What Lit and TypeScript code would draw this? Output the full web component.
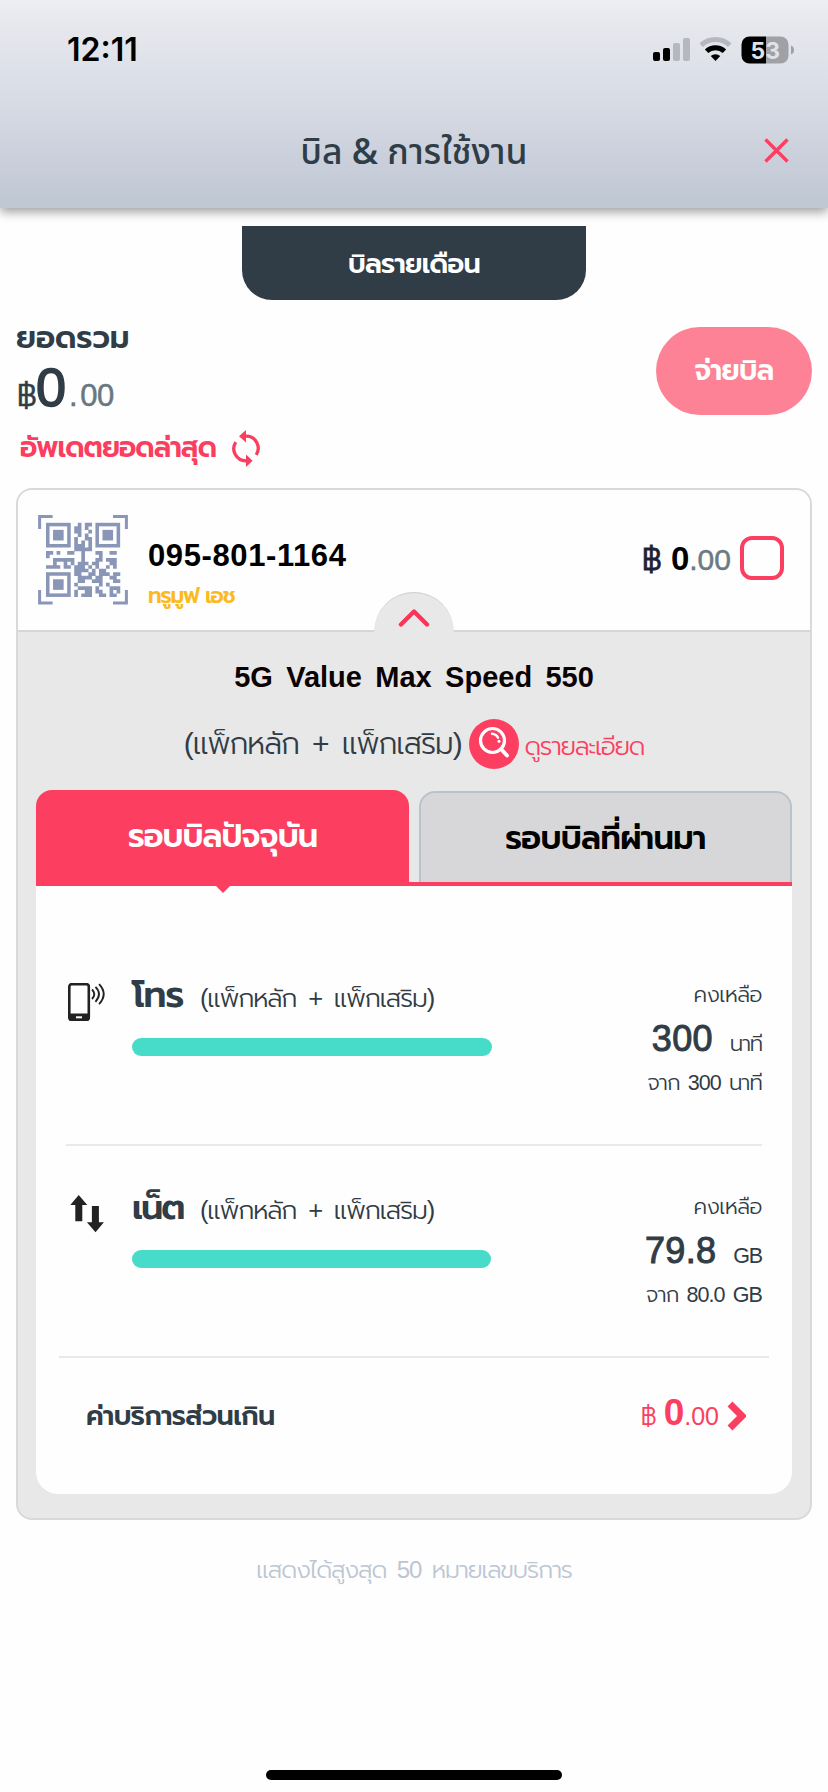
import { LitElement, html, css, svg } from "lit";

const QR_ROWS = [
  ".........X.XX........",
  "........XX.X.........",
  "........XX..X........",
  ".........X.X.........",
  "........X..XX........",
  "........X.X.X........",
  "........XXX.X........",
  "........XXXXX........",
  "XX.X..XX..X...XX..XX.",
  "X.........X....X.....",
  "..XXXXXX..X...XX.XXX.",
  "..X..X.X.XXX.XX...XX.",
  "XXXX.XX.XXX.X.X..X.X.",
  "........XXXX.X.XX....",
  "........XX..XX.XXX.XX",
  ".........XXXX.XX..XX.",
  ".........XX..XXX...XX",
  "........X......X.X...",
  ".........XXXX.X...XXX",
  "........X..XX.XX..X.X",
  "........X.XXX..XX.XX.",
];

const qrModules = QR_ROWS.map((row, y) =>
  [...row].map((c, x) => (c === "X" ? `M${x} ${y}h1.04v1.04h-1.04z` : "")).join("")
).join("");

const finder = (x: number, y: number) => svg`
  <rect x=${x + 0.5} y=${y + 0.5} width="6" height="6" fill="none" stroke="#8a96b8" stroke-width="1"></rect>
  <rect x=${x + 2} y=${y + 2} width="3" height="3" fill="#8a96b8"></rect>`;

const phoneIcon = svg`<svg width="40" height="40" viewBox="0 0 40 40">
  <rect x="3.300" y="1.200" width="19.500" height="35.600" rx="2.500" fill="none" stroke="#222" stroke-width="2.600"></rect>
  <path d="M2.500 30.500h21v5.300a2.300 2.300 0 0 1-2.300 2.300h-16.400a2.300 2.300 0 0 1-2.300-2.300z" fill="#222"></path>
  <rect x="10" y="33.300" width="6" height="2" fill="#fff"></rect>
  <path d="M26 6.500q4.600 4.500 0 9.500M29.500 3.800q7 7 0 15M33.100 1.200q9.200 9.800 0 20" fill="none" stroke="#222" stroke-width="1.900"></path>
</svg>`;

const netIcon = svg`<svg width="40" height="40" viewBox="0 0 40 40">
  <path d="M12.700 0l8.600 10h-5v16.300h-7v-16.300h-5z M29.500 37.300l-8.600-10h5v-16.300h7v16.300h5z" fill="#222"></path>
</svg>`;

const USAGE = [
  { icon: phoneIcon, name: "โทร", remain: "300", unit: "นาที", total: "จาก 300 นาที", bar: 360, cls: "first" },
  { icon: netIcon, name: "เน็ต", remain: "79.8", unit: "GB", total: "จาก 80.0 GB", bar: 359, cls: "second" },
];

class AppRoot extends LitElement {
  static styles = css`
    :host {
      display: block;
      --red: #fc3f60;
      --ink: #303c46;
      --th: "Liberation Sans", "Prompt", "Noto Sans Thai", sans-serif;
    }
    * { box-sizing: border-box; }
    svg { display: block; flex: none; }
    .page {
      width: 828px;
      height: 1792px;
      display: flex;
      flex-direction: column;
      background: #fefefe;
      font-family: var(--th);
      color: var(--ink);
      font-weight: 300;
      white-space: nowrap;
      overflow: hidden;
    }
    .page span { line-height: 0; }
    header {
      height: 208px;
      background: linear-gradient(#edeef3 0, #e7e8ed 12%, #dadee7 42%, #c6ccd8 85%, #bfc9d3 96%);
      box-shadow: 0 4px 10px rgba(0, 0, 0, 0.38);
    }
    .status {
      height: 100px;
      display: flex;
      align-items: center;
      justify-content: space-between;
      padding: 0 33px 0 67px;
      font: 600 32px/100px Inter, sans-serif;
      color: #000;
    }
    .num { font: 700 23px Inter, sans-serif; fill: #dfe2e9; }
    .title {
      display: grid;
      grid-template-columns: 80px 1fr 80px;
      align-items: center;
      height: 100px;
      font: 550 35.5px/100px "Open Sans", "Noto Sans Thai", sans-serif;
      text-align: center;
    }
    .title svg { margin-left: 16px; }
    .monthly {
      align-self: center;
      margin-top: 18px;
      width: 344px;
      height: 74px;
      border-radius: 0 0 30px 30px;
      background: #303c46;
      color: #fff;
      text-align: center;
      font-weight: 600;
      font-size: 27px;
      letter-spacing: -0.7px;
      line-height: 77px;
    }
    .summary { display: flex; justify-content: space-between; height: 188px; padding: 0 16px; }
    .sum-l { padding-top: 18px; }
    .total { font-size: 31px; line-height: 39px; height: 40px; font-weight: 600; letter-spacing: -0.1px; }
    .amount { margin-top: 7px; font-size: 32px; line-height: 60px; padding-left: 1px; }
    .amount .baht { font-size: 31px; -webkit-text-stroke: 0.6px; }
    .amount .big { font-size: 54px; -webkit-text-stroke: 1.6px; margin-left: -1px; }
    .amount .dec { font-size: 31px; color: #687782; word-spacing: -5px; letter-spacing: -0.5px; -webkit-text-stroke: 0.5px; }
    .refresh {
      display: flex;
      align-items: center;
      height: 40px;
      margin-top: 3px;
      padding-left: 4px;
      gap: 15px;
      color: #fb3e60;
      font-weight: 600;
      font-size: 28px;
      letter-spacing: -1px;
      line-height: 40px;
    }
    .pay {
      margin-top: 27px;
      width: 156px;
      height: 88px;
      border: 0;
      border-radius: 44px;
      background: #fd8295;
      color: #fff;
      font: 600 28px/88px var(--th);
      letter-spacing: -0.6px;
      padding: 0;
    }
    .card {
      margin: 0 16px;
      height: 1032px;
      border: 2px solid #d9d9d9;
      border-radius: 16px;
      background: #e8e8e8;
      overflow: hidden;
    }
    .card-head {
      position: relative;
      display: flex;
      height: 142px;
      padding-left: 20px;
      background: #fefefe;
      border-bottom: 2px solid #d6d6d6;
    }
    .qr { margin-top: 25px; }
    .line { margin: 46px 0 0 20px; }
    .phone { font-size: 31px; font-weight: 700; line-height: 40px; letter-spacing: 0.6px; color: #000; }
    .brand { margin-top: 5px; font-size: 21.5px; font-weight: 600; line-height: 30px; letter-spacing: -1.2px; word-spacing: 2px; color: #fbbb20; }
    .due {
      display: flex;
      align-items: center;
      height: 44px;
      margin: 46px 26px 0 auto;
      gap: 9px;
      font-size: 31px;
    }
    .due-amt { padding-top: 3px; line-height: 48px; color: #1f1f35; }
    .due-amt .baht { -webkit-text-stroke: 0.8px; }
    .due-amt .whole { font-size: 33px; font-weight: 700; color: #000; }
    .due-amt .dec { font-size: 30px; color: #6b7a83; -webkit-text-stroke: 0.5px; }
    .check { width: 44px; height: 44px; border: 4px solid var(--red); border-radius: 12px; }
    .bump {
      position: absolute;
      left: 356px;
      bottom: -2px;
      width: 80px;
      height: 40px;
      border-radius: 40px 40px 0 0;
      background: #e8e8e8;
      box-shadow: inset 0 2px 1px -1px #cfcfcf;
    }
    .bump svg { margin: 16px 0 0 24px; }
    .plan {
      padding-top: 25px;
      text-align: center;
      font-size: 29px;
      font-weight: 700;
      line-height: 40px;
      color: #0a0203;
      word-spacing: 5.3px;
    }
    .detail { display: flex; align-items: center; justify-content: center; height: 50px; margin-top: 22px; }
    .pack { font-size: 30px; line-height: 50px; word-spacing: 6px; letter-spacing: -1.1px; margin-right: 7px; }
    .look { font-size: 25px; line-height: 50px; padding-top: 4px; margin-left: 6px; letter-spacing: -1.3px; color: var(--red); }
    .tabs { display: grid; grid-template-columns: 373px 373px; gap: 10px; margin: 21px 18px 0; height: 92px; }
    .tab { text-align: center; font-size: 32px; font-weight: 600; letter-spacing: -0.9px; border-radius: 16px 16px 0 0; }
    .tab.on { background: var(--red); color: #fff; line-height: 93px; }
    .tab.off {
      margin: 1px 0;
      line-height: 90px;
      letter-spacing: -0.6px;
      border: 2px solid #b9c3cc;
      border-bottom: 0;
      background: #d7d7d9;
      color: #000;
    }
    .panel {
      position: relative;
      height: 612px;
      margin: 0 18px;
      padding-top: 48px;
      border-top: 4px solid var(--red);
      border-radius: 0 0 22px 22px;
      background: #fefefe;
    }
    .arrow {
      position: absolute;
      top: -1px;
      left: 179px;
      border: 8px solid transparent;
      border-top-color: var(--red);
      border-bottom: 0;
    }
    .usage { display: flex; height: 212px; border-bottom: 2px solid #e8e9ea; }
    .usage.first { margin: 0 30px; }
    .usage.second { margin: 0 23px; padding: 0 7px; }
    .ico { margin-top: 49px; width: 66px; }
    .mid { padding-top: 36px; }
    .name { font-size: 36px; line-height: 50px; }
    .name b { display: inline-block; width: 52px; line-height: 50px; font-weight: 600; letter-spacing: -1px; }
    .second .name b { font-size: 35px; letter-spacing: -2px; }
    .name .sub { font-size: 25.5px; word-spacing: 6px; letter-spacing: -1.15px; margin-left: 16px; }
    .bar { margin-top: 18px; height: 18px; border-radius: 9px; background: #46dcc9; }
    .right { margin-left: auto; padding-top: 46px; text-align: right; font-size: 21.5px; word-spacing: 3px; letter-spacing: -0.9px; }
    .r1 { line-height: 30px; letter-spacing: -0.5px; }
    .r2 { margin-top: 4px; line-height: 50px; font-size: 36px; }
    .r2 b { font-weight: 400; letter-spacing: 0.3px; -webkit-text-stroke: 1px; }
    .r2 .unit { font-size: 21.5px; margin-left: 17px; letter-spacing: -1.2px; }
    .r3 { margin-top: 4px; line-height: 30px; }
    .over { display: flex; align-items: center; height: 116px; padding: 0 46px 0 50px; }
    .over-t { flex: 1; font-size: 27px; font-weight: 600; letter-spacing: -0.6px; line-height: 117px; }
    .over-a { font-size: 27px; line-height: 118px; color: var(--red); margin-right: 8px; }
    .over-a .baht { font-size: 25px; }
    .over-a b { font-size: 37px; font-weight: 700; line-height: 0; }
    .over-a .dec { font-size: 25px; }
    .note {
      margin-top: 29px;
      text-align: center;
      font-size: 24px;
      line-height: 41px;
      word-spacing: 5px;
      letter-spacing: -1.15px;
      color: #bcc6d2;
    }
    .home { align-self: center; margin: auto 0 12px; width: 296px; height: 10px; border-radius: 5px; background: #000; }
  `;

  render() {
    return html`<div class="page">
      <header>
        <div class="status">
          <span>12:11</span>
          <svg width="142" height="28" viewBox="0 0 142 28">
            <rect x="0" y="16" width="7" height="9" rx="2"></rect>
            <rect x="10" y="12" width="7" height="13" rx="2"></rect>
            <rect x="20" y="7" width="7" height="18" rx="2" fill="#b6b8bf"></rect>
            <rect x="30" y="2" width="7" height="23" rx="2" fill="#b6b8bf"></rect>
            <path d="M48.300 9.200a20.500 20.500 0 0 1 28.400 0" fill="none" stroke="#b6b8bf" stroke-width="5"></path>
            <path d="M53.600 15.300a13 13 0 0 1 17.800 0" fill="none" stroke="#000" stroke-width="5"></path>
            <path d="M62.500 25l-4.800-5a7.200 7.200 0 0 1 9.600 0z"></path>
            <path d="M113 0.500h14.500a8 8 0 0 1 8 8v11a8 8 0 0 1-8 8h-14.500z" fill="#a0a1a6"></path>
            <path d="M113 0.500h-16.500a8 8 0 0 0-8 8v11a8 8 0 0 0 8 8h16.500z"></path>
            <path d="M138 9.500q3 1 3 4.500t-3 4.500z" fill="#a0a1a6"></path>
            <text class="num" x="97.500" y="22.500">53</text>
          </svg>
        </div>
        <div class="title">
          <i></i>
          <div>บิล &amp; การใช้งาน</div>
          <svg width="25" height="25" viewBox="0 0 25 25"><path d="M1.500 1.500l22 22M23.500 1.500l-22 22" stroke="#fc3f60" stroke-width="3.400"></path></svg>
        </div>
      </header>

      <div class="monthly">บิลรายเดือน</div>

      <section class="summary">
        <div class="sum-l">
          <div class="total">ยอดรวม</div>
          <div class="amount"><span class="baht">฿</span><span class="big">0</span><span class="dec"> . 00</span></div>
          <div class="refresh">อัพเดตยอดล่าสุด
            <svg width="30" height="37" viewBox="0 0 30 37">
              <path d="M15 6.200a12 12 0 0 1 10.200 18.600M15 30.800a12 12 0 0 1-10.200-18.600" fill="none" stroke="#fb3e60" stroke-width="3.300"></path>
              <path d="M15 0v12.500l-7-6.300z M15 24.500v12.500l6.600-6.300z" fill="#fb3e60"></path>
            </svg>
          </div>
        </div>
        <button class="pay">จ่ายบิล</button>
      </section>

      <section class="card">
        <div class="card-head">
          <svg class="qr" width="90" height="90" viewBox="0 0 90 90">
            <path d="M1.600 14v-12.400h13M75 1.600h13.400v12.400M1.600 75v12.900h13M75 87.900h13.400v-12.900" fill="none" stroke="#8a96b8" stroke-width="3"></path>
            <g transform="translate(8 7.800) scale(3.530)">
              ${finder(0, 0)}${finder(14, 0)}${finder(0, 14)}
              <path d=${qrModules} fill="#8a96b8"></path>
            </g>
          </svg>
          <div class="line">
            <div class="phone">095-801-1164</div>
            <div class="brand">ทรูมูฟ เอช</div>
          </div>
          <div class="due">
            <div class="due-amt"><span class="baht">฿</span><span class="whole"> 0</span><span class="dec">.00</span></div>
            <div class="check"></div>
          </div>
          <div class="bump">
            <svg width="32" height="20" viewBox="0 0 32 20"><path d="M3 16.500l13-13 13 13" fill="none" stroke="#fc3458" stroke-width="4.400" stroke-linecap="round" stroke-linejoin="round"></path></svg>
          </div>
        </div>

        <div class="plan">5G Value Max Speed 550</div>
        <div class="detail">
          <div class="pack">(แพ็กหลัก + แพ็กเสริม)</div>
          <svg width="50" height="50" viewBox="0 0 50 50">
            <circle cx="25" cy="25" r="25" fill="#fc3f60"></circle>
            <circle cx="23.500" cy="21.500" r="12" fill="none" stroke="#fff" stroke-width="3.200"></circle>
            <path d="M32 30l6 6.500" stroke="#fff" stroke-width="4" stroke-linecap="round"></path>
            <path d="M23 14.800q4.500 0.500 6 4" fill="none" stroke="#fff" stroke-width="2.400" stroke-linecap="round"></path>
            <circle cx="30" cy="22.300" r="1.500" fill="#fff"></circle>
          </svg>
          <div class="look">ดูรายละเอียด</div>
        </div>

        <div class="tabs">
          <div class="tab on">รอบบิลปัจจุบัน</div>
          <div class="tab off">รอบบิลที่ผ่านมา</div>
        </div>
        <div class="panel">
          <div class="arrow"></div>
          ${USAGE.map((u) => html`<div class="usage ${u.cls}">
            <div class="ico">${u.icon}</div>
            <div class="mid">
              <div class="name"><b>${u.name}</b><span class="sub">(แพ็กหลัก + แพ็กเสริม)</span></div>
              <div class="bar" style="width:${u.bar}px"></div>
            </div>
            <div class="right">
              <div class="r1">คงเหลือ</div>
              <div class="r2"><b>${u.remain}</b><span class="unit">${u.unit}</span></div>
              <div class="r3">${u.total}</div>
            </div>
          </div>`)}
          <div class="over">
            <div class="over-t">ค่าบริการส่วนเกิน</div>
            <div class="over-a"><span class="baht">฿ </span><b>0</b><span class="dec">.00</span></div>
            <svg width="19" height="30" viewBox="0 0 19 30"><path d="M3 3l12 12-12 12" fill="none" stroke="#fc3f60" stroke-width="7"></path></svg>
          </div>
        </div>
      </section>

      <div class="note">แสดงได้สูงสุด 50 หมายเลขบริการ</div>
      <div class="home"></div>
    </div>`;
  }
}
customElements.define("app-root", AppRoot);
